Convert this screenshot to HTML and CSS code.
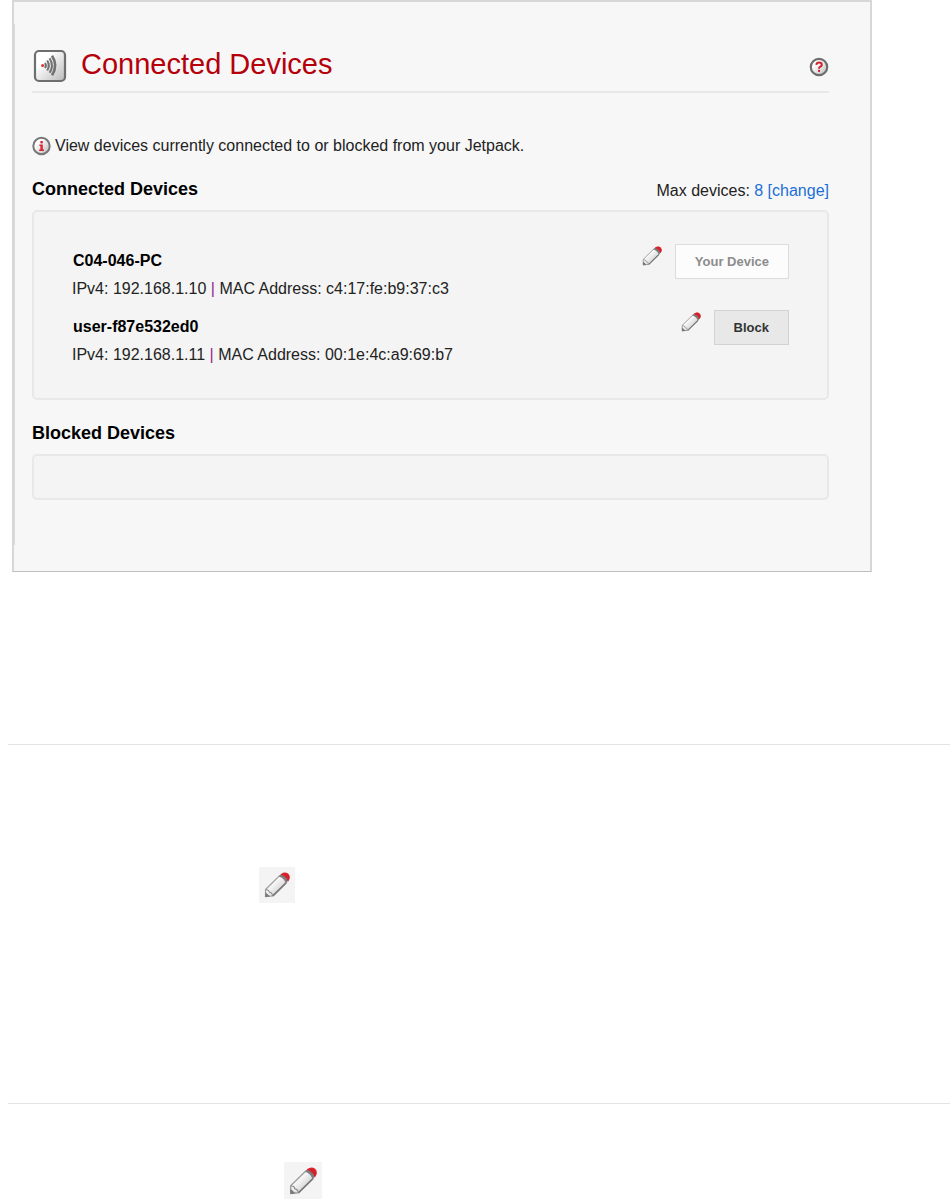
FILE: index.html
```html
<!DOCTYPE html>
<html lang="en">

<head>
    <meta charset="UTF-8">
    <meta name="viewport" content="width=device-width, initial-scale=1.0">
    <title>Connected Devices</title>
    <link rel="stylesheet" href="styles.css">
</head>

<body>
    <svg class="defs" width="0" height="0" aria-hidden="true">
        <defs>
            <linearGradient id="metal" x1="0" y1="0" x2="1" y2="1">
                <stop offset="0.3" stop-color="#ffffff" />
                <stop offset="1" stop-color="#b8b8b8" />
            </linearGradient>
            <symbol id="pencil" viewBox="0 0 20 20">
                <path d="M1.2 13.4 L12 2.8 Q16 3.4 17.4 8 L6.8 18.4 L1.2 18.9 Z" fill="url(#metal)" stroke="#a0a0a0" stroke-width="1" stroke-linejoin="round" />
                <path d="M17 8.4 L6.8 18.4" fill="none" stroke="#777777" stroke-width="1.2" />
                <path d="M1 15.6 L4.6 18.8 L1 19.2 Z" fill="#777777" />
                <path d="M1.4 13.6 Q3.8 13.4 4.2 15.6 Q6.4 15.8 6.6 18.4" fill="none" stroke="#8a8a8a" stroke-width="0.8" />
                <path d="M11.4 3.4 L13.2 1.6 Q17.4 2.6 18.6 6.8 L16.8 8.6 Q15.6 4.6 11.4 3.4 Z" fill="#7c7c7c" />
                <path d="M13.4 1.8 Q16 -0.2 18.4 1.6 Q20.4 3.8 18.6 6.6 Q17.2 3 13.4 1.8 Z" fill="#d81f2a" stroke="#d81f2a" stroke-width="0.8" />
            </symbol>
        </defs>
    </svg>

    <main class="panel">
        <div class="content">
            <header class="header">
                <svg class="header-icon" width="34" height="34" viewBox="0 0 34 34" aria-hidden="true">
                    <rect x="2" y="2" width="30" height="30" rx="4" fill="url(#metal)" stroke="#6e6e6e" stroke-width="2.2" />
                    <circle cx="9.6" cy="16.5" r="1.5" fill="#e0313f" />
                    <g fill="none" stroke="#717171" stroke-width="2">
                        <path d="M12 14 Q13.8 16.5 12 19" />
                        <path d="M14.2 11.5 Q17.4 16.5 14.2 21.5" />
                        <path d="M16.6 9.2 Q21.2 16.5 16.6 23.8" />
                        <path d="M19 6.8 Q25.4 16.5 19 26.2" stroke-width="2.6" />
                    </g>
                </svg>
                <h1>Connected Devices</h1>
                <button type="button" class="icon-button help" aria-label="Help">
                    <svg width="20" height="20" viewBox="0 0 20 20" aria-hidden="true">
                        <circle cx="10" cy="10" r="8.2" fill="url(#metal)" stroke="#6e6e6e" stroke-width="2.2" />
                        <path d="M7.3 7.8 Q7.6 5.6 10.2 5.6 Q12.8 5.6 12.8 7.7 Q12.8 9 11.3 9.7 Q10 10.3 10 11.7" fill="none" stroke="#d0202e" stroke-width="2" />
                        <rect x="9" y="12.9" width="2" height="2" fill="#d0202e" />
                    </svg>
                </button>
            </header>

            <p class="intro">
                <svg width="20" height="20" viewBox="0 0 20 20" aria-hidden="true">
                    <circle cx="9.5" cy="10" r="8.2" fill="url(#metal)" stroke="#777777" stroke-width="2" />
                    <rect x="8.4" y="5" width="2.4" height="2.4" fill="#dc2532" />
                    <path d="M7.4 8.5 H10.8 V13.5 H12 V15 H7.2 V13.5 H8.4 V10 H7.4 Z" fill="#dc2532" />
                </svg>
                View devices currently connected to or blocked from your Jetpack.
            </p>

            <div class="section-head">
                <h2>Connected Devices</h2>
                <p>Max devices: <a href="#">8 [change]</a></p>
            </div>
            <ul class="box">
                <li class="device">
                    <div class="device-info">
                        <h3>C04-046-PC</h3>
                        <p>IPv4: 192.168.1.10 <span class="divider">|</span> MAC Address: c4:17:fe:b9:37:c3</p>
                    </div>
                    <div class="device-actions">
                        <button type="button" class="icon-button" aria-label="Rename C04-046-PC">
                            <svg width="20" height="20" aria-hidden="true"><use href="#pencil" /></svg>
                        </button>
                        <button type="button" class="button" disabled>Your Device</button>
                    </div>
                </li>
                <li class="device">
                    <div class="device-info">
                        <h3>user-f87e532ed0</h3>
                        <p>IPv4: 192.168.1.11 <span class="divider">|</span> MAC Address: 00:1e:4c:a9:69:b7</p>
                    </div>
                    <div class="device-actions">
                        <button type="button" class="icon-button" aria-label="Rename user-f87e532ed0">
                            <svg width="20" height="20" aria-hidden="true"><use href="#pencil" /></svg>
                        </button>
                        <button type="button" class="button">Block</button>
                    </div>
                </li>
            </ul>

            <div class="section-head">
                <h2>Blocked Devices</h2>
            </div>
            <div class="box box-empty"></div>
        </div>
    </main>

    <section class="note note-first">
        <div class="tile">
            <svg width="26" height="26" aria-hidden="true"><use href="#pencil" /></svg>
        </div>
    </section>
    <section class="note note-second">
        <div class="tile tile-large">
            <svg width="28" height="28" aria-hidden="true"><use href="#pencil" /></svg>
        </div>
    </section>
</body>

</html>
```

FILE: styles.css
```css
* {
    box-sizing: border-box;
}

body {
    font-family: "Liberation Sans", Arial, sans-serif;
    font-size: 16px;
    line-height: 20px;
    color: #222;
    background-color: #fff;
    margin: 0;
}

h1,
h2,
h3,
p,
ul {
    margin: 0;
    padding: 0;
}

svg {
    display: block;
    flex: none;
}

.defs {
    position: absolute;
}

.panel {
    display: flow-root;
    margin: 0 78px 172px 12px;
    background-color: #f7f7f7;
    border: 2px solid #d7d7d7;
    border-bottom: 1px solid #bebebe;
}

.content {
    margin: 22px 0 26px;
    padding: 24px 41px 45px 17px;
    border-left: 1px solid #dcdcdc;
}

.header {
    display: flex;
    align-items: center;
    padding-bottom: 8px;
    border-bottom: 2px solid #e8e8e8;
}

.header-icon {
    margin: 1px 14px 0 1px;
}

.header h1 {
    flex: 1;
    padding-bottom: 4px;
    color: #b5000b;
    font-size: 29px;
    font-weight: normal;
    line-height: 30px;
}

.icon-button {
    padding: 0;
    border: none;
    background: none;
    cursor: pointer;
}

.help {
    padding-top: 2px;
}

.intro {
    display: flex;
    align-items: center;
    gap: 3px;
    margin-top: 43px;
}

.section-head {
    display: flex;
    justify-content: space-between;
    align-items: center;
    height: 24px;
    margin: 21px 0 9px;
}

.section-head h2 {
    color: #000;
    font-size: 18px;
}

.section-head p {
    padding-top: 4px;
}

.section-head a {
    color: #1b6fd6;
    text-decoration: none;
}

.box {
    display: flex;
    flex-direction: column;
    gap: 11px;
    padding: 32px 38px 33px;
    background-color: #f4f4f4;
    border: 2px solid #e8e8e8;
    border-radius: 5px;
    list-style: none;
}

.box-empty {
    min-height: 46px;
    padding: 0;
}

.device {
    display: flex;
    justify-content: space-between;
    align-items: flex-start;
}

.device-info {
    padding-top: 7px;
}

.device-info h3 {
    margin-bottom: 8px;
    padding-left: 1px;
    color: #000;
    font-size: 16px;
}

.divider {
    color: #912a91;
}

.device-actions {
    display: flex;
    align-items: flex-start;
    gap: 13px;
}

.device-actions .icon-button {
    padding-top: 2px;
}

.button {
    height: 35px;
    padding: 0 19px;
    border: 1px solid #d3d3d3;
    background-color: #e8e8e8;
    color: #333;
    font-family: inherit;
    font-size: 13px;
    font-weight: bold;
    cursor: pointer;
}

.button:disabled {
    background-color: #fcfcfc;
    border-color: #dcdcdc;
    color: #8c8c8c;
    cursor: default;
}

.note {
    margin-left: 8px;
    border-top: 1px solid #e4e4e4;
}

.note-first {
    padding: 122px 0 200px 251px;
}

.note-second {
    padding: 58px 0 0 276px;
}

.tile {
    display: flex;
    justify-content: center;
    align-items: center;
    width: 36px;
    height: 36px;
    background-color: #f4f4f4;
}

.tile-large {
    width: 38px;
    height: 38px;
}
```
